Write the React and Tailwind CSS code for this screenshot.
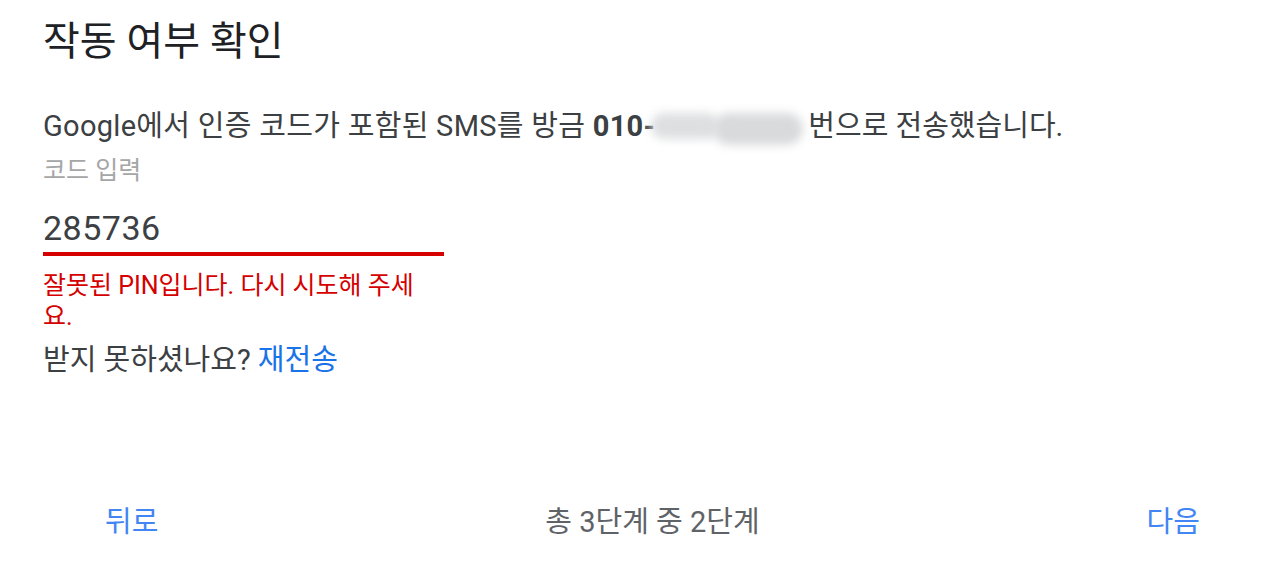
export default function App() {
    const font = { fontFamily: 'Roboto, "Noto Sans CJK KR", sans-serif' };

    return (
        <div
            className="w-[1286px] h-[578px] bg-white flex flex-col overflow-hidden"
            style={font}
        >
            <div className="pl-[43px] pt-[14px]">
                <h1 className="text-[40px] leading-[56px] text-[#202124]">
                    작동 여부 확인
                </h1>

                <p className="mt-[38px] h-[36px] text-[29px] leading-[36px] text-[#3c4043] whitespace-nowrap">
                    <span className="tracking-[0.3px]">
                        Google에서 인증 코드가 포함된 SMS를 방금{' '}
                        <span className="font-bold">010-</span>
                    </span>
                    <span className="inline-flex align-top items-center w-[157px] h-[36px] -ml-[4px]">
                        <span className="w-[68px] h-[26px] rounded-full bg-[#dedfe1] blur-[5px]" />
                        <span className="w-[90px] h-[32px] -ml-[6px] mt-[6px] rounded-full bg-[#d9dadc] blur-[5px]" />
                    </span>
                    번으로 전송했습니다.
                </p>

                <label className="block mt-[12px] text-[25px] leading-[30px] text-[#a6a6a6]">
                    코드 입력
                </label>

                <div className="w-[401px] mt-[21px]">
                    <div className="text-[34px] leading-[42px] text-[#3c4043] tracking-[0.5px]">
                        285736
                    </div>
                    <div className="h-[4px] bg-[#d50000] mt-[3px]" />
                </div>

                <p className="w-[395px] mt-[14px] text-[25px] leading-[31px] text-[#d50000]">
                    잘못된 PIN입니다. 다시 시도해 주세요.
                </p>

                <p className="mt-[10px] text-[29px] leading-[36px] text-[#3c4043]">
                    받지 못하셨나요? <span className="text-[#1a73e8]">재전송</span>
                </p>
            </div>

            <div className="mt-auto mb-[38px] flex items-center justify-between pl-[105px] pr-[86px]">
                <button className="text-[29px] leading-[36px] text-[#4285f4]">뒤로</button>
                <span className="text-[29px] leading-[36px] text-[#5f6368]">
                    총 3단계 중 2단계
                </span>
                <button className="text-[29px] leading-[36px] text-[#4285f4]">다음</button>
            </div>
        </div>
    );
}
